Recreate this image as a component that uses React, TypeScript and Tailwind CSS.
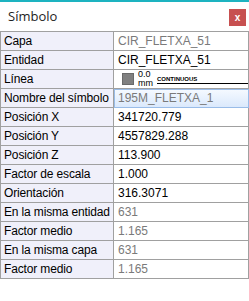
import React from 'react';

type Row = {
  label: string;
  value?: string;
  muted?: boolean;
  selected?: boolean;
  line?: boolean;
};

const ROWS: Row[] = [
  { label: 'Capa', value: 'CIR_FLETXA_51', muted: true },
  { label: 'Entidad', value: 'CIR_FLETXA_51' },
  { label: 'Línea', line: true },
  { label: 'Nombre del símbolo', value: '195M_FLETXA_1', muted: true, selected: true },
  { label: 'Posición X', value: '341720.779' },
  { label: 'Posición Y', value: '4557829.288' },
  { label: 'Posición Z', value: '113.900' },
  { label: 'Factor de escala', value: '1.000' },
  { label: 'Orientación', value: '316.3071' },
  { label: 'En la misma entidad', value: '631', muted: true },
  { label: 'Factor medio', value: '1.165', muted: true },
  { label: 'En la misma capa', value: '631', muted: true },
  { label: 'Factor medio', value: '1.165', muted: true },
];

// muestra de estilo de línea: color, grosor y tipo
function LineSample() {
  return (
    <div className="flex h-full items-center gap-[4px] pl-[4px]">
      <div className="h-[12px] w-[12px] border border-[#6a6a6a] bg-[#808080]" />
      <div className="flex flex-col text-[9px] leading-[9px] text-black">
        <span>0.0</span>
        <span>mm</span>
      </div>
      <div className="flex flex-1 flex-col pt-[1px]">
        <span className="text-[6px] leading-[8px] font-bold text-black">CONTINUOUS</span>
        <div className="h-px w-full bg-black" />
      </div>
    </div>
  );
}

export default function App() {
  return (
    <div
      className="h-[301px] w-[249px] overflow-hidden border-t-2 border-[#1db3c0] bg-white"
      style={{ fontFamily: '"Liberation Sans", Arial, sans-serif' }}
    >
      <div className="flex h-[29px] items-center justify-between pl-[8px] pr-[3px]">
        <span className="pt-[1px] text-[13px] text-[#1e1e1e]" style={{ fontFamily: '"Open Sans", "Noto Sans", sans-serif' }}>
          Símbolo
        </span>
        <button
          type="button"
          className="mt-[2px] flex h-[17px] w-[17px] items-center justify-center bg-[#c75050] text-[10px] leading-none font-bold text-white"
        >
          x
        </button>
      </div>

      <div className="w-[249px] border-t border-l border-[#a0a0a0]">
        {ROWS.map((r, i) => (
          <div key={i} className="grid h-[19px] grid-cols-[113px_1fr] text-[12px] leading-[18px]">
            <div className="overflow-hidden border-r border-b border-[#a0a0a0] bg-[#f0f0fa] pl-[3px] tracking-[-0.15px] whitespace-nowrap text-black">
              {r.label}
            </div>
            <div
              className={
                r.selected
                  ? 'border border-[#99bce8] bg-gradient-to-b from-[#f4f9ff] to-[#dbe9fc] pl-[3px] leading-[16px] text-[#7a7a7a]'
                  : 'border-r border-b border-[#a0a0a0] pl-[4px] ' + (r.muted ? 'text-[#7a7a7a]' : 'text-black')
              }
            >
              {r.line ? <LineSample /> : r.value}
            </div>
          </div>
        ))}
      </div>
    </div>
  );
}
